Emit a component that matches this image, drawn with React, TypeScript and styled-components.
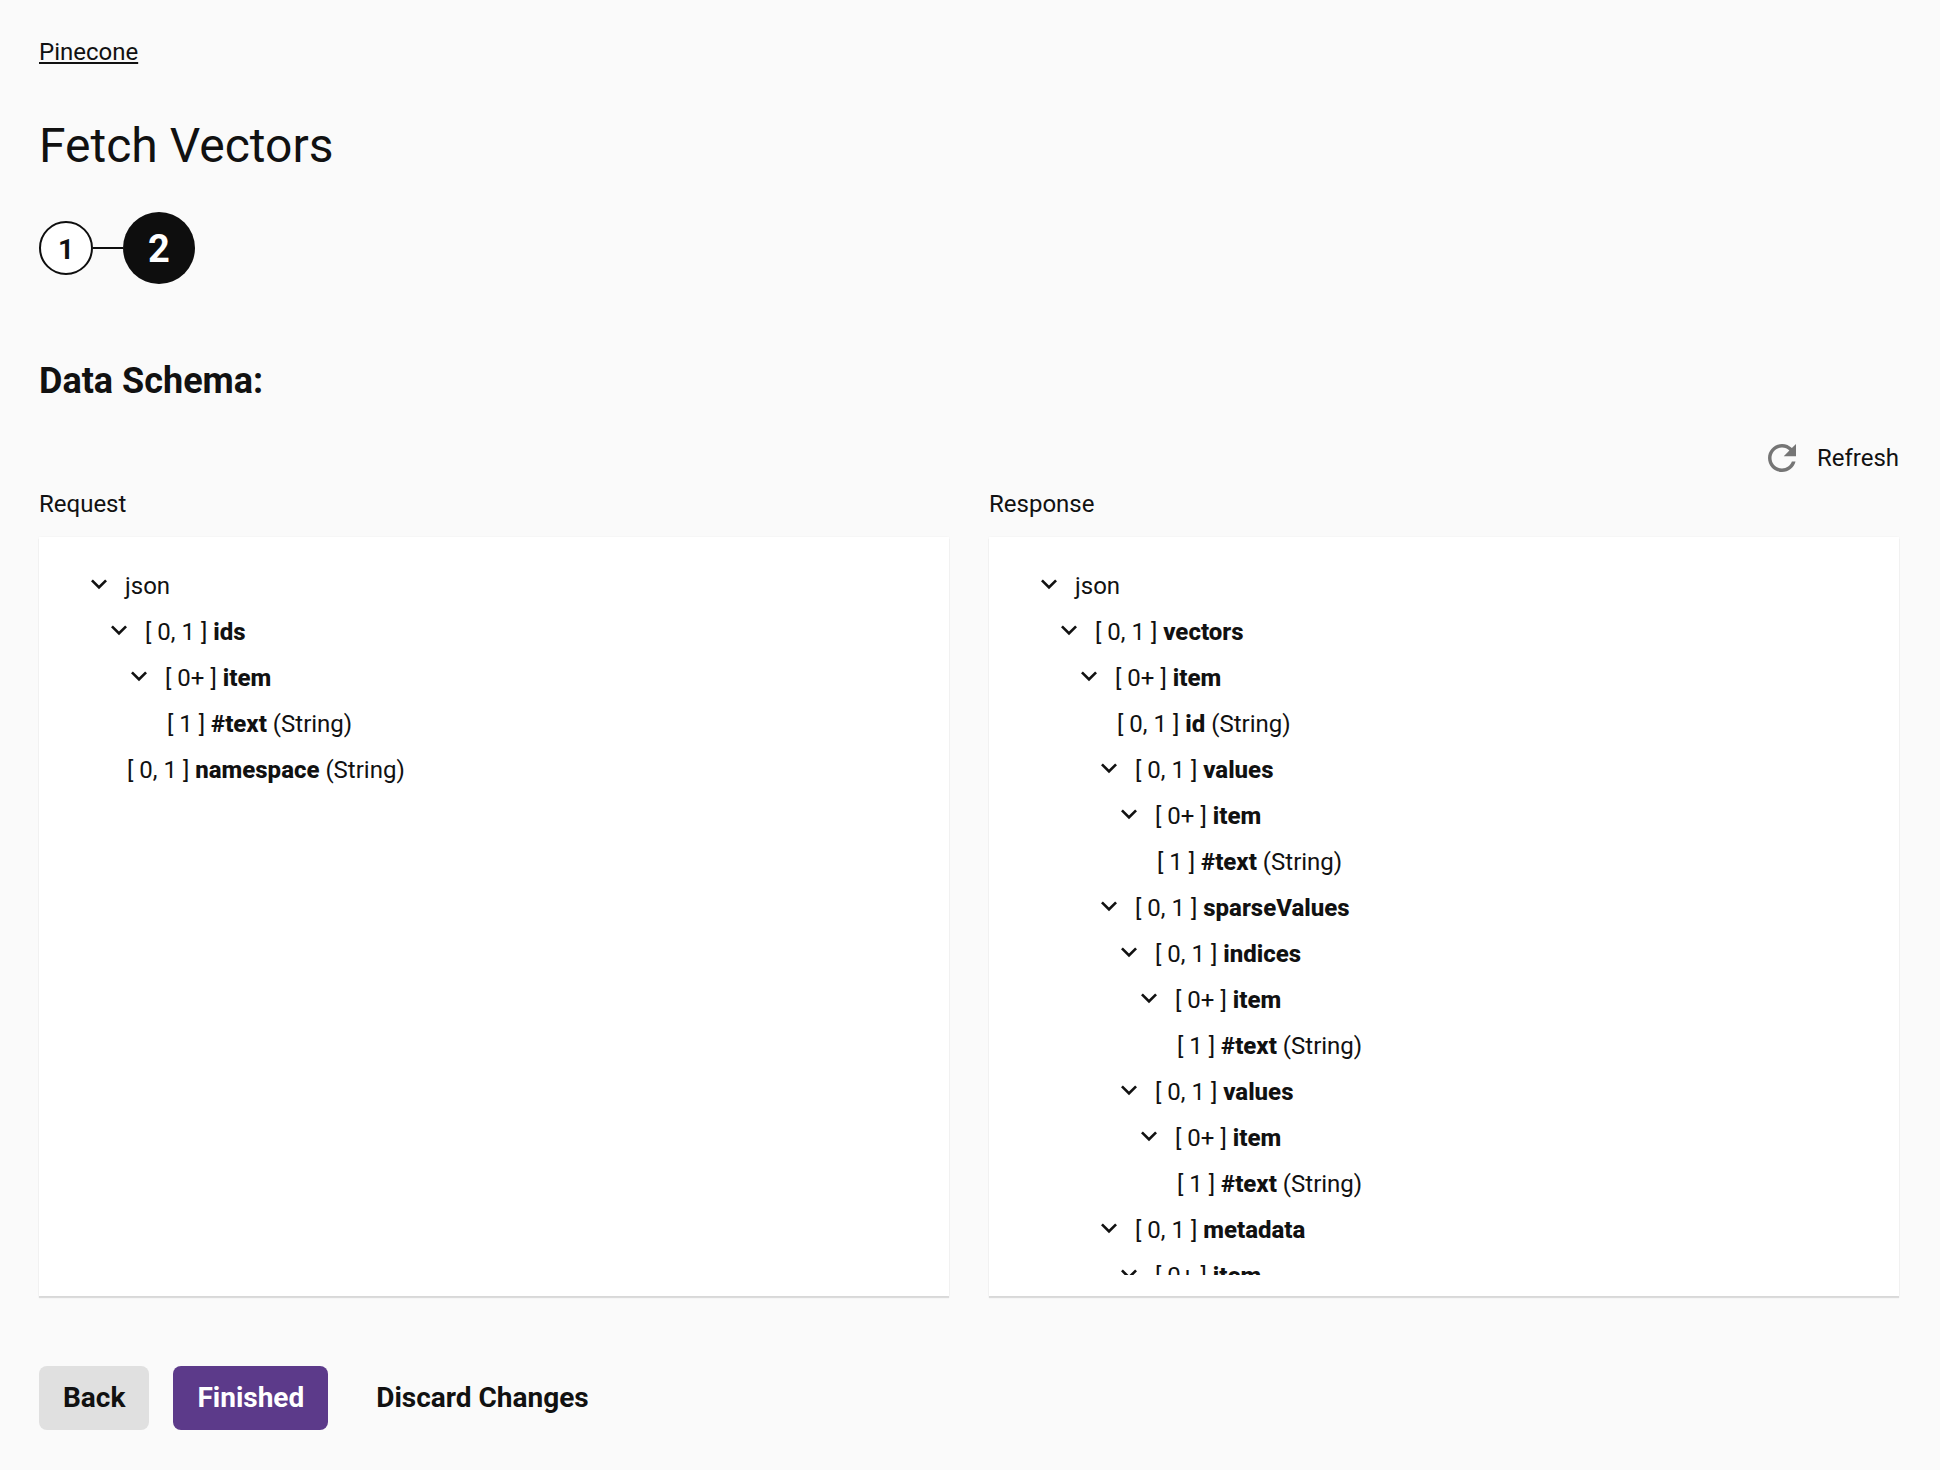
import React from "react";
import styled, { createGlobalStyle } from "styled-components";

const Global = createGlobalStyle`
  html, body { margin: 0; padding: 0; background: #fafafa; }
  body { font-family: Roboto, "Liberation Sans", sans-serif; color: #111; }
`;

const Page = styled.div`
  width: 1940px;
  height: 1470px;
  box-sizing: border-box;
  padding: 36px 41px 0 39px;
  overflow: hidden;
`;
const Crumb = styled.a`
  display: block;
  width: max-content;
  font-size: 24px;
  line-height: 32px;
  color: #111;
  text-decoration: underline;
`;
const Title = styled.h1`
  margin: 48px 0 0;
  font-size: 48px;
  line-height: 60px;
  font-weight: 400;
`;
const Stepper = styled.div`
  display: flex;
  align-items: center;
  margin-top: 36px;
  height: 72px;
`;
const StepDone = styled.div`
  width: 54px;
  height: 54px;
  box-sizing: border-box;
  border: 2px solid #0e0e0e;
  border-radius: 50%;
  background: #fff;
  display: flex;
  align-items: center;
  justify-content: center;
  padding-top: 2px;
  font-size: 28px;
  font-weight: 700;
`;
const StepLine = styled.div`
  width: 30px;
  height: 2px;
  background: #0e0e0e;
`;
const StepActive = styled.div`
  width: 72px;
  height: 72px;
  border-radius: 50%;
  background: #0e0e0e;
  color: #fff;
  display: flex;
  align-items: center;
  justify-content: center;
  padding-top: 2px;
  box-sizing: border-box;
  font-size: 38px;
  font-weight: 700;
`;
const Section = styled.h2`
  margin: 73px 0 0;
  font-size: 36px;
  line-height: 48px;
  font-weight: 700;
`;
const RefreshRow = styled.div`
  display: flex;
  justify-content: flex-end;
  align-items: center;
  gap: 14px;
  margin-top: 32px;
  height: 42px;
  font-size: 24px;
`;
const Columns = styled.div`
  display: grid;
  grid-template-columns: 910px 910px;
  gap: 40px;
  margin-top: 9px;
`;
const Label = styled.div`
  font-size: 24px;
  line-height: 32px;
  margin-bottom: 17px;
`;
const Panel = styled.div`
  height: 759px;
  box-sizing: border-box;
  padding: 26px 20px 21px 44px;
  background: #fff;
  box-shadow: 0 2px 1px 0 rgba(0, 0, 0, 0.12), 0 0 2px 0 rgba(0, 0, 0, 0.05);
`;
const Scroll = styled.div`
  height: 712px;
  overflow: hidden;
`;
const Row = styled.div`
  display: flex;
  align-items: center;
  height: 46px;
  font-size: 24px;
  white-space: pre;
`;
const Chevron = styled.svg`
  width: 32px;
  height: 32px;
  margin-right: 10px;
  flex: none;
  fill: #111;
  position: relative;
  top: -2px;
`;
const LeafGap = styled.span`
  display: inline-block;
  width: 24px;
  flex: none;
`;
const Children = styled.div`
  padding-left: 20px;
`;
const Name = styled.b`
  font-weight: 800;
`;
const Footer = styled.div`
  display: flex;
  gap: 24px;
  margin-top: 70px;
`;
const Button = styled.button<{ $kind: "grey" | "purple" | "text" }>`
  height: 64px;
  padding: 0 24px 2px;
  border: none;
  border-radius: 8px;
  font-family: inherit;
  font-size: 28px;
  font-weight: 700;
  color: ${(p) => (p.$kind === "purple" ? "#fff" : "#111")};
  background: ${(p) =>
    p.$kind === "purple" ? "#5c3a8a" : p.$kind === "grey" ? "#e0e0e0" : "transparent"};
`;

type Node = { card?: string; name: string; type?: string; kids?: Node[] };

const text: Node = { card: "1", name: "#text", type: "String" };
const item = (...kids: Node[]): Node => ({ card: "0+", name: "item", kids });

const requestTree: Node = {
  name: "json",
  kids: [
    { card: "0, 1", name: "ids", kids: [item(text)] },
    { card: "0, 1", name: "namespace", type: "String" },
  ],
};
const responseTree: Node = {
  name: "json",
  kids: [
    {
      card: "0, 1",
      name: "vectors",
      kids: [
        item(
          { card: "0, 1", name: "id", type: "String" },
          { card: "0, 1", name: "values", kids: [item(text)] },
          {
            card: "0, 1",
            name: "sparseValues",
            kids: [
              { card: "0, 1", name: "indices", kids: [item(text)] },
              { card: "0, 1", name: "values", kids: [item(text)] },
            ],
          },
          { card: "0, 1", name: "metadata", kids: [item(text)] }
        ),
      ],
    },
  ],
};

function TreeNode({ node }: { node: Node }) {
  return (
    <div>
      <Row>
        {node.kids ? (
          <Chevron viewBox="0 0 24 24">
            <path d="M16.59 8.59 12 13.17 7.41 8.59 6 10l6 6 6-6z" />
          </Chevron>
        ) : (
          <LeafGap />
        )}
        {node.card ? (
          <span>
            {`[ ${node.card} ] `}
            <Name>{node.name}</Name>
            {node.type ? ` (${node.type})` : ""}
          </span>
        ) : (
          <span>{node.name}</span>
        )}
      </Row>
      {node.kids && (
        <Children>
          {node.kids.map((k, i) => (
            <TreeNode key={i} node={k} />
          ))}
        </Children>
      )}
    </div>
  );
}

export default function App() {
  return (
    <Page>
      <Global />
      <Crumb>Pinecone</Crumb>
      <Title>Fetch Vectors</Title>
      <Stepper>
        <StepDone>1</StepDone>
        <StepLine />
        <StepActive>2</StepActive>
      </Stepper>
      <Section>Data Schema:</Section>
      <RefreshRow>
        <svg width="42" height="42" viewBox="0 0 24 24" fill="#757575">
          <path d="M17.65 6.35C16.2 4.9 14.21 4 12 4c-4.42 0-7.99 3.58-7.99 8s3.57 8 7.99 8c3.73 0 6.84-2.55 7.73-6h-2.08c-.82 2.33-3.04 4-5.65 4-3.31 0-6-2.69-6-6s2.69-6 6-6c1.66 0 3.14.69 4.22 1.78L13 11h7V4l-2.35 2.35z" />
        </svg>
        <span>Refresh</span>
      </RefreshRow>
      <Columns>
        <div>
          <Label>Request</Label>
          <Panel>
            <Scroll>
              <TreeNode node={requestTree} />
            </Scroll>
          </Panel>
        </div>
        <div>
          <Label>Response</Label>
          <Panel>
            <Scroll>
              <TreeNode node={responseTree} />
            </Scroll>
          </Panel>
        </div>
      </Columns>
      <Footer>
        <Button $kind="grey">Back</Button>
        <Button $kind="purple">Finished</Button>
        <Button $kind="text">Discard Changes</Button>
      </Footer>
    </Page>
  );
}
